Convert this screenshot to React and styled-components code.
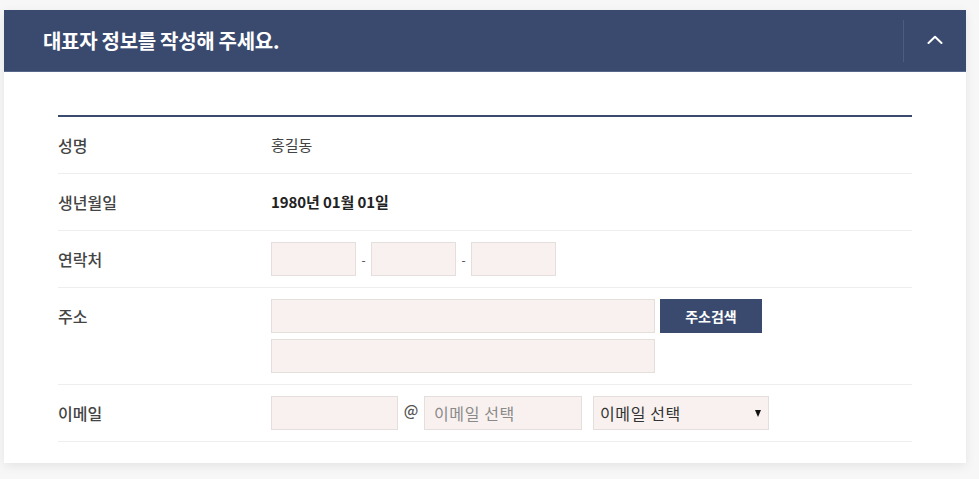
import { styled, createGlobalStyle } from "styled-components";

const GlobalStyle = createGlobalStyle`
  body {
    margin: 0;
    background: #f7f7f7;
    font-family: "Noto Sans CJK KR", "Noto Sans", sans-serif;
  }
`;

export default function App() {
  return (
    <>
      <GlobalStyle />
      <Page>
        <Panel>
          <Header>
            <Title>대표자 정보를 작성해 주세요.</Title>
            <Toggle aria-label="접기">
              <svg width="16" height="9" viewBox="0 0 16 9" fill="none">
                <path
                  d="M1.5 8 L8 1.8 L14.5 8"
                  stroke="#fff"
                  strokeWidth="2"
                  strokeLinecap="round"
                  strokeLinejoin="round"
                />
              </svg>
            </Toggle>
          </Header>
          <Body>
            <Table>
              <Row>
                <Label>성명</Label>
                <Value>홍길동</Value>
              </Row>
              <Row>
                <Label>생년월일</Label>
                <Value $strong>1980년 01월 01일</Value>
              </Row>
              <Row>
                <Label>연락처</Label>
                <Fields>
                  <Input $w={85} />
                  <Dash>-</Dash>
                  <Input $w={85} />
                  <Dash>-</Dash>
                  <Input $w={85} />
                </Fields>
              </Row>
              <Row>
                <Label>주소</Label>
                <Stack>
                  <Fields>
                    <Input $w={384} />
                    <SearchButton>주소검색</SearchButton>
                  </Fields>
                  <Input $w={384} />
                </Stack>
              </Row>
              <Row>
                <Label>이메일</Label>
                <Fields>
                  <Input $w={127} />
                  <At>@</At>
                  <Input $w={158} placeholder="이메일 선택" />
                  <SelectWrap>
                    <Select defaultValue="">
                      <option value="">이메일 선택</option>
                      <option value="naver.com">naver.com</option>
                      <option value="gmail.com">gmail.com</option>
                    </Select>
                    <Caret />
                  </SelectWrap>
                </Fields>
              </Row>
            </Table>
          </Body>
        </Panel>
      </Page>
    </>
  );
}

const Page = styled.div`
  padding: 10px 13px 16px 4px;
`;

const Panel = styled.section`
  background: #fff;
  box-shadow: 0 3px 10px rgba(0, 0, 0, 0.08);
`;

const Header = styled.div`
  display: flex;
  align-items: center;
  justify-content: space-between;
  height: 62px;
  padding-left: 39px;
  background: #3a4a6f;
  border-bottom: 1px solid #56678c;
  box-sizing: border-box;
`;

const Title = styled.h2`
  margin: 0;
  color: #fff;
  font-size: 20px;
  font-weight: 700;
  letter-spacing: -0.3px;
`;

const Toggle = styled.button`
  display: flex;
  align-items: center;
  justify-content: center;
  width: 63px;
  height: 42px;
  padding: 0 0 2px;
  border: 0;
  border-left: 1px solid rgba(255, 255, 255, 0.1);
  background: transparent;
  cursor: pointer;
`;

const Body = styled.div`
  padding: 43px 54px 21px;
`;

const Table = styled.div`
  border-top: 2px solid #3a4a6f;
`;

const Row = styled.div`
  display: grid;
  grid-template-columns: 213px 1fr;
  align-items: start;
  padding: 11px 0;
  border-bottom: 1px solid #eeeeee;
`;

const Label = styled.div`
  line-height: 34px;
  font-size: 16px;
  font-weight: 500;
  color: #444;
`;

const Value = styled.div`
  line-height: 34px;
  font-size: 15px;
  font-weight: ${(p) => (p.$strong ? 700 : 400)};
  color: ${(p) => (p.$strong ? "#222" : "#444")};
  letter-spacing: ${(p) => (p.$strong ? "-0.1px" : "0")};
`;

const Fields = styled.div`
  display: flex;
  align-items: center;
`;

const Stack = styled.div`
  display: flex;
  flex-direction: column;
  gap: 6px;
`;

const Input = styled.input`
  width: ${(p) => p.$w}px;
  height: 34px;
  box-sizing: border-box;
  padding: 0 9px;
  border: 1px solid #e4dedc;
  background: #f9f1ef;
  font-family: inherit;
  font-size: 16px;
  letter-spacing: 0.6px;
  color: #333;
  outline: none;

  &::placeholder {
    color: #8a8a8a;
  }
`;

const Dash = styled.span`
  width: 15px;
  text-align: center;
  font-size: 12px;
  color: #444;
`;

const At = styled.span`
  width: 26px;
  text-align: center;
  margin-top: -8px;
  font-size: 15px;
  font-weight: 500;
  color: #555;
`;

const SearchButton = styled.button`
  width: 102px;
  height: 34px;
  margin-left: 5px;
  border: 0;
  background: #3a4a6f;
  color: #fff;
  font-family: inherit;
  font-size: 14px;
  font-weight: 700;
  cursor: pointer;
`;

const SelectWrap = styled.div`
  position: relative;
  margin-left: 11px;
`;

const Select = styled.select`
  appearance: none;
  width: 176px;
  height: 34px;
  box-sizing: border-box;
  padding: 0 24px 0 6px;
  border: 1px solid #e4dedc;
  border-radius: 0;
  background: #f9f1ef;
  font-family: inherit;
  font-size: 16px;
  letter-spacing: 0.6px;
  color: #333;
  outline: none;
`;

const Caret = styled.span`
  position: absolute;
  right: 8px;
  top: 50%;
  margin-top: -3px;
  width: 0;
  height: 0;
  border-left: 3.5px solid transparent;
  border-right: 3.5px solid transparent;
  border-top: 7px solid #111;
  pointer-events: none;
`;
